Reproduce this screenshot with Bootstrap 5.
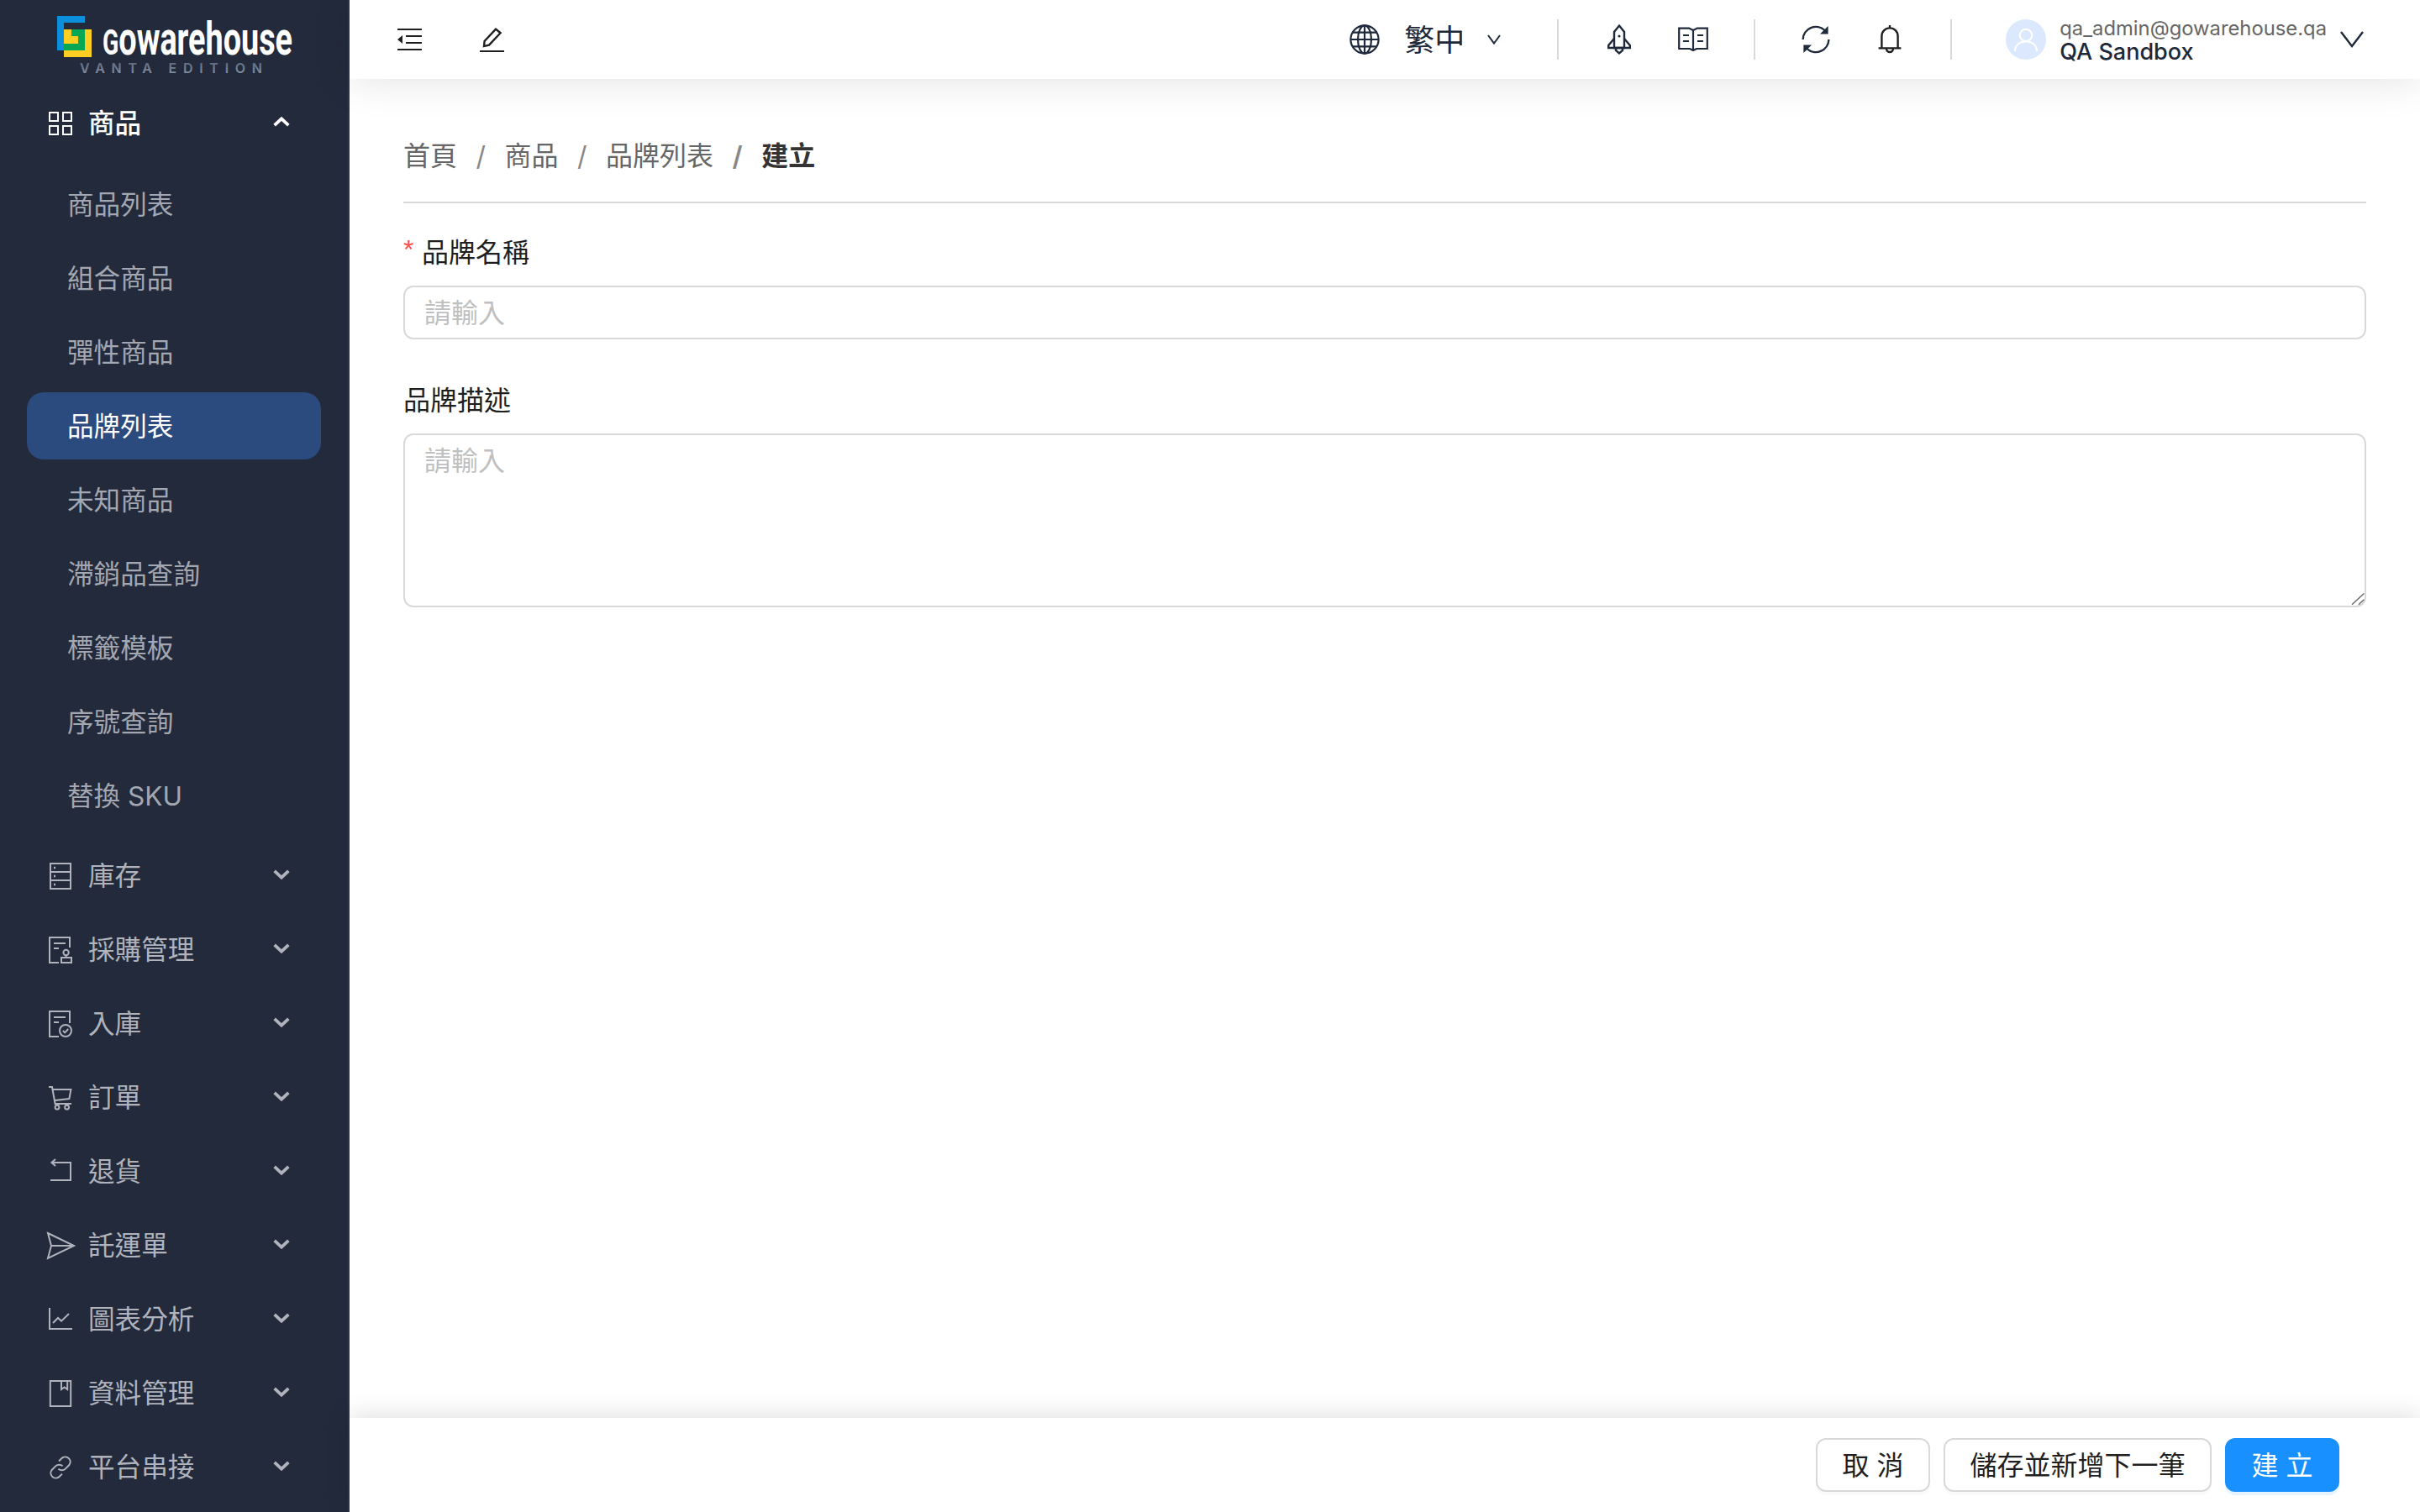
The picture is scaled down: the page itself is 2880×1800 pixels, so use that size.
<!DOCTYPE html>
<html lang="zh-Hant">
<head>
    <title>建立品牌</title>
    <meta charset="utf-8">
    <link href="https://cdn.jsdelivr.net/npm/bootstrap@5.3.3/dist/css/bootstrap.min.css" rel="stylesheet">
    <style>
        html { zoom: 2; }
        body {
            width: 1440px;
            height: 900px;
            overflow: hidden;
            font-family: Inter, "Noto Sans CJK TC", sans-serif;
            font-size: 16px;
            color: #1f1f1f;
            background: #fff;
        }
        /* sidebar */
        .side {
            width: 208px;
            height: 900px;
            flex: none;
            background: #232a3b;
            border-right: 1px solid #2d3549;
            color: #b0b3bc;
            font-size: 15.8px;
        }
        .side-logo { height: 51.5px; padding: 9px 0 0 34px; }
        .side-logo svg { display: block; overflow: visible; }
        .side-item {
            height: 44px;
            display: flex;
            align-items: center;
            padding-left: 29px;
            padding-right: 34.5px;
            line-height: 1;
        }
        .side-item svg.ic { width: 14px; height: 16px; flex: none; margin-right: 9.5px; }
        .side-item .chev { width: 10px; height: 7px; margin-left: auto; margin-top: -2px; }
        .side-item.open { color: #fff; }
        .side-sub { height: 44px; display: flex; align-items: center; padding-left: 40px; padding-top: 1px; color: #a3a7b1; line-height: 1; }
        .side-sub.now {
            height: 40px;
            margin: 2px 16px 2px 16px;
            padding-left: 24px;
            border-radius: 10px;
            color: #fff;
            background: #2b4a7e;
        }
        .side-subs { margin: 4px 0; }
        /* top bar */
        .top-bar {
            height: 47px;
            background: #fff;
            padding-left: 28.5px;
            padding-right: 33.5px;
            box-shadow: 0 2px 24px rgba(0, 0, 0, .11);
            position: relative;
            z-index: 2;
        }
        .tool-btn { width: 44px; height: 24px; display: flex; align-items: center; justify-content: center; }
        .top-sep { width: 1px; height: 24px; background: #d9d9d9; margin: 0 14px; flex: none; }
        .lang-text { font-size: 18px; color: #1e293b; line-height: 1; margin: 1px 13.5px 0 14.5px; }
        .user-box { margin-top: 2px; }
        .user-mail { font-size: 11.9px; line-height: 13px; color: #666; }
        .user-name { font-size: 13.5px; line-height: 15px; font-weight: 500; color: #1e293b; }
        .user-pic { width: 24px; height: 24px; }
        /* form area */
        .form-area { padding: 36px 32px 0 32px; }
        .crumbs { --bs-breadcrumb-margin-bottom: 0; --bs-breadcrumb-item-padding-x: 11.25px; --bs-breadcrumb-divider-color: #888; line-height: 20px; height: 20px; }
        .crumbs a { color: #666; text-decoration: none; }
        .crumbs .active { color: #333; font-weight: 600; }
        .crumb-rule { height: 1px; background: #d9d9d9; margin-top: 17px; margin-bottom: 19.5px; }
        .fld-label { line-height: 20px; height: 20px; margin-bottom: 9.5px; color: #1f1f1f; }
        .fld-star { color: #ff4d4f; font-size: 16px; line-height: 0; vertical-align: 2px; margin-right: 4.8px; font-family: "Liberation Sans", sans-serif; }
        .fld-input {
            height: 32px;
            padding: 4px 11.5px;
            font-size: 16px;
            line-height: 22px;
            border-color: #d9d9d9;
            border-radius: 6px;
            color: #1f1f1f;
        }
        .fld-input::placeholder { color: #bfbfbf; }
        textarea.fld-input { height: 103.5px; min-height: 103.5px; resize: none; padding-top: 4.5px; display: block; }
        .grip-ic { position: absolute; right: 0; bottom: 0; pointer-events: none; }
        .fld-wrap { margin-bottom: 26.5px; }
        /* bottom bar */
        .foot-bar {
            height: 56px;
            background: #fff;
            padding: 12px 48px 0 0;
            gap: 8px;
            box-shadow: 0 -2px 14px rgba(0, 0, 0, .12);
            position: relative;
        }
        .foot-btn {
            height: 32px;
            padding: 3.5px 14.75px 2.5px;
            font-size: 16px;
            line-height: 24px;
            border-radius: 6px;
            border-color: #d9d9d9;
            color: #1f1f1f;
            background: #fff;
            box-shadow: 0 2px 0 rgba(0, 0, 0, .02);
        }
        .foot-btn.main { background: #1890ff; border-color: #1890ff; color: #fff; box-shadow: 0 2px 0 rgba(5, 145, 255, .1); }
    </style>
</head>
<body class="d-flex">

<aside class="side">
    <div class="side-logo">
        <svg width="150" height="36" viewBox="0 0 150 36">
            <defs>
                <linearGradient id="vantaFill" x1="0" y1="0" x2="0" y2="1"><stop offset="0" stop-color="#566379"/><stop offset="1" stop-color="#8a97aa"/></linearGradient>
            </defs>
            <path d="M0 .5H16.500V4.500H4V21H0Z" fill="#0b8fdc"/>
            <path d="M4 8.500H20.500V25H4Z" fill="#fdcf23"/>
            <path d="M8.500 8.500H16.500V21H4V17H12.500V12.500H8.500Z" fill="#07a855"/>
            <text x="27" y="23.500" font-family="'Liberation Sans Narrow', Roboto, sans-serif" font-weight="700" font-size="28" fill="#fff" textLength="113" lengthAdjust="spacingAndGlyphs"><tspan font-size="21">G</tspan>owarehouse</text>
            <text x="13.500" y="34.500" font-family="Inter, sans-serif" font-weight="600" font-size="8" fill="url(#vantaFill)" textLength="108.500">VANTA EDITION</text>
        </svg>
    </div>

    <div class="side-item open">
        <svg class="ic" viewBox="0 0 14 16" fill="none" stroke="currentColor" stroke-width="1"><rect x=".5" y="1.500" width="5" height="5"/><rect x="8.500" y="1.500" width="5" height="5"/><rect x=".5" y="9.500" width="5" height="5"/><rect x="8.500" y="9.500" width="5" height="5"/></svg>
        <span class="fw-medium">商品</span>
        <svg class="chev" viewBox="0 0 12 8" fill="none" stroke="currentColor" stroke-width="2.300"><path d="M1 6.500 6 1.800l5 4.700"/></svg>
    </div>
    <div class="side-subs">
        <div class="side-sub">商品列表</div>
        <div class="side-sub">組合商品</div>
        <div class="side-sub">彈性商品</div>
        <div class="side-sub now">品牌列表</div>
        <div class="side-sub">未知商品</div>
        <div class="side-sub">滯銷品查詢</div>
        <div class="side-sub">標籤模板</div>
        <div class="side-sub">序號查詢</div>
        <div class="side-sub">替換 SKU</div>
    </div>

    <div class="side-item">
        <svg class="ic" viewBox="0 0 14 16" fill="none" stroke="currentColor" stroke-width="1"><rect x="1" y=".5" width="12" height="15"/><path d="M1 5.500h12M1 10.500h12"/><path d="M3 3h1M3 8h1M3 13h1" stroke-width="1.200"/></svg>
        <span>庫存</span>
        <svg class="chev" viewBox="0 0 12 8" fill="none" stroke="currentColor" stroke-width="2.300"><path d="M1 1.500 6 6.200l5-4.700"/></svg>
    </div>
    <div class="side-item">
        <svg class="ic" viewBox="0 0 14 16" fill="none" stroke="currentColor" stroke-width="1"><path d="M6 15.500H.5V.5h12v6M3 4h7M3 7h3"/><circle cx="10.300" cy="9.500" r="1.600"/><path d="M10.300 11v1.500M7.500 12.500h6v3h-6z"/></svg>
        <span>採購管理</span>
        <svg class="chev" viewBox="0 0 12 8" fill="none" stroke="currentColor" stroke-width="2.300"><path d="M1 1.500 6 6.200l5-4.700"/></svg>
    </div>
    <div class="side-item">
        <svg class="ic" viewBox="0 0 14 16" fill="none" stroke="currentColor" stroke-width="1"><path d="M6 15.500H.5V.5h12v7M3 4h7M3 7h3"/><circle cx="10" cy="12" r="3.500"/><path d="m8.400 12 1.200 1.200 2-2.200"/></svg>
        <span>入庫</span>
        <svg class="chev" viewBox="0 0 12 8" fill="none" stroke="currentColor" stroke-width="2.300"><path d="M1 1.500 6 6.200l5-4.700"/></svg>
    </div>
    <div class="side-item">
        <svg class="ic" viewBox="0 0 14 16" fill="none" stroke="currentColor" stroke-width="1"><path d="M0 1.500h2l1.800 10h9.700M2.400 3h10.800l-1 5.500-8.500 1"/><circle cx="5" cy="13.600" r="1.200"/><circle cx="10.800" cy="13.600" r="1.200"/></svg>
        <span>訂單</span>
        <svg class="chev" viewBox="0 0 12 8" fill="none" stroke="currentColor" stroke-width="2.300"><path d="M1 1.500 6 6.200l5-4.700"/></svg>
    </div>
    <div class="side-item">
        <svg class="ic" viewBox="0 0 14 16" fill="none" stroke="currentColor" stroke-width="1"><path d="M2 2.500h11v10.500H1"/><path d="M4 .5 1.700 2.500 4 4.500"/></svg>
        <span>退貨</span>
        <svg class="chev" viewBox="0 0 12 8" fill="none" stroke="currentColor" stroke-width="2.300"><path d="M1 1.500 6 6.200l5-4.700"/></svg>
    </div>
    <div class="side-item">
        <svg class="ic" viewBox="0 0 14 16" fill="none" stroke="currentColor" stroke-width="1" overflow="visible"><path d="M-.5.5 15 8-.5 15.500 1.500 8zM1.500 8H15"/></svg>
        <span>託運單</span>
        <svg class="chev" viewBox="0 0 12 8" fill="none" stroke="currentColor" stroke-width="2.300"><path d="M1 1.500 6 6.200l5-4.700"/></svg>
    </div>
    <div class="side-item">
        <svg class="ic" viewBox="0 0 14 16" fill="none" stroke="currentColor" stroke-width="1"><path d="M.5 1v12.500H14"/><path d="m2.500 10 3-3 2 1.800L12 4.500"/></svg>
        <span>圖表分析</span>
        <svg class="chev" viewBox="0 0 12 8" fill="none" stroke="currentColor" stroke-width="2.300"><path d="M1 1.500 6 6.200l5-4.700"/></svg>
    </div>
    <div class="side-item">
        <svg class="ic" viewBox="0 0 14 16" fill="none" stroke="currentColor" stroke-width="1"><rect x=".9" y=".5" width="12.200" height="15"/><path d="M7.500.5v5l1.800-1.300 1.800 1.300v-5"/></svg>
        <span>資料管理</span>
        <svg class="chev" viewBox="0 0 12 8" fill="none" stroke="currentColor" stroke-width="2.300"><path d="M1 1.500 6 6.200l5-4.700"/></svg>
    </div>
    <div class="side-item">
        <svg class="ic" viewBox="0 0 14 16" fill="none" stroke="currentColor" stroke-width="1"><path d="M6 4.200 8 2.300a3 3 0 0 1 4.200 4.200l-2.300 2.300a3 3 0 0 1-4.200 0"/><path d="M8 11.800 6 13.700a3 3 0 0 1-4.200-4.200l2.300-2.300a3 3 0 0 1 4.200 0"/></svg>
        <span>平台串接</span>
        <svg class="chev" viewBox="0 0 12 8" fill="none" stroke="currentColor" stroke-width="2.300"><path d="M1 1.500 6 6.200l5-4.700"/></svg>
    </div>
</aside>

<div class="flex-grow-1 d-flex flex-column">
    <header class="top-bar d-flex align-items-center">
        <svg width="15" height="13" viewBox="0 0 15 13" fill="none" stroke="#1f1f1f" stroke-width="1"><path d="M0 .5h14.500M0 12.500h14.500M5 4.500h9.500M5 8.500h9.500"/><path d="M0 6.500 3 4v5z" fill="#1f1f1f" stroke="none"/></svg>
        <svg class="pen-ic" width="15" height="15" viewBox="0 0 15 15" fill="none" stroke="#1f1f1f" style="margin-left:34px"><path d="M0 14.500h14.500" stroke-width="1"/><path d="M2.500 11.500 2.800 8.500 9.500 1.300 12.300 3.600 5.500 10.800z" stroke-width="1.200"/></svg>

        <div class="ms-auto d-flex align-items-center">
            <svg width="18" height="18" viewBox="0 0 18 18" fill="none" stroke="#1e293b" stroke-width="1.100"><circle cx="9" cy="9" r="8.300"/><ellipse cx="9" cy="9" rx="4" ry="8.300"/><path d="M9 .7v16.600M.7 9h16.600M2 4.800h14M2 13.200h14"/></svg>
            <span class="lang-text">繁中</span>
            <svg width="8" height="6" viewBox="0 0 8 6" fill="none" stroke="#1e293b" stroke-width="1"><path d="M.5.500 4 5.300 7.500.5"/></svg>
        </div>
        <div class="top-sep" style="margin-left:33.5px"></div>
        <div class="tool-btn">
            <svg width="14" height="18" viewBox="0 0 14 18" fill="none" stroke="#1e293b" stroke-width="1.200"><path d="M7 .8 10 4.500v9.500H4V4.500z"/><path d="M4 8.500.6 12.500v1.500H13.400v-1.500L10 8.500"/><path d="M5 14v1.500l2 1.700 2-1.700V14"/><circle cx="7" cy="7" r=".8" fill="#1e293b" stroke="none"/></svg>
        </div>
        <div class="tool-btn">
            <svg width="18" height="15" viewBox="0 0 18 15" fill="none" stroke="#1e293b" stroke-width="1.100"><path d="M.6.800H6.500L9 2l2.500-1.200h5.900V13H11l-2 1-2-1H.6z"/><path d="M9 2v12M3 5h3.500M3 8.500h3.500M11.500 5H15M11.500 8.500H15"/></svg>
        </div>
        <div class="top-sep"></div>
        <div class="tool-btn">
            <svg width="17" height="18" viewBox="0 0 17 18" fill="none" stroke="#1e293b" stroke-width="1.200"><path d="M.8 9a7.700 7.700 0 0 1 13-5.400"/><path d="M16.200 9a7.700 7.700 0 0 1-13 5.400"/><path d="M15.800 1v4.800H11z" fill="#1e293b" stroke="none"/><path d="M1.200 17v-4.800H6z" fill="#1e293b" stroke="none"/></svg>
        </div>
        <div class="tool-btn">
            <svg width="14" height="18" viewBox="0 0 14 18" fill="none" stroke="#1f1f1f" stroke-width="1.200"><path d="M7 .5v1.700M2.200 14V7a4.800 4.800 0 0 1 9.600 0v7M.3 14.200h13.400M5 14.500a2 2 0 0 0 4 0"/></svg>
        </div>
        <div class="top-sep"></div>
        <svg class="user-pic" viewBox="0 0 24 24" fill="none" style="margin-left:18px"><circle cx="12" cy="12" r="12" fill="#dbe8fd"/><circle cx="12" cy="9.500" r="3.600" stroke="#fff" stroke-width="1.100"/><path d="M5.500 19c0-3.600 2.800-5.800 6.500-5.800s6.500 2.200 6.500 5.800" stroke="#fff" stroke-width="1.100"/></svg>
        <div class="ms-2 user-box">
            <div class="user-mail">qa_admin@gowarehouse.qa</div>
            <div class="user-name">QA Sandbox</div>
        </div>
        <svg class="ms-2" width="14" height="10" viewBox="0 0 14 10" fill="none" stroke="#1e293b" stroke-width="1.200"><path d="M.5.500 7 9 13.500.5"/></svg>
    </header>

    <main class="form-area flex-grow-1">
        <nav aria-label="breadcrumb">
            <ol class="breadcrumb crumbs">
                <li class="breadcrumb-item"><a href="#">首頁</a></li>
                <li class="breadcrumb-item"><a href="#">商品</a></li>
                <li class="breadcrumb-item"><a href="#">品牌列表</a></li>
                <li class="breadcrumb-item active" aria-current="page">建立</li>
            </ol>
        </nav>
        <div class="crumb-rule"></div>
        <form>
            <div class="fld-wrap">
                <label class="fld-label d-block" for="brandName"><span class="fld-star">*</span>品牌名稱</label>
                <input class="form-control fld-input" id="brandName" type="text" placeholder="請輸入">
            </div>
            <div class="fld-wrap">
                <label class="fld-label d-block" for="brandDesc">品牌描述</label>
                <div class="position-relative">
                    <textarea class="form-control fld-input" id="brandDesc" placeholder="請輸入"></textarea>
                    <svg class="grip-ic" width="15" height="15" viewBox="0 0 15 15" fill="none" stroke="#666" stroke-width=".7"><path d="M6.500 13.400 13.700 6.700M10.500 13.400l3.200-3"/></svg>
                </div>
            </div>
        </form>
    </main>

    <footer class="foot-bar d-flex justify-content-end">
        <button type="button" class="btn foot-btn">取 消</button>
        <button type="button" class="btn foot-btn">儲存並新增下一筆</button>
        <button type="button" class="btn foot-btn main">建 立</button>
    </footer>
</div>

</body>
</html>
